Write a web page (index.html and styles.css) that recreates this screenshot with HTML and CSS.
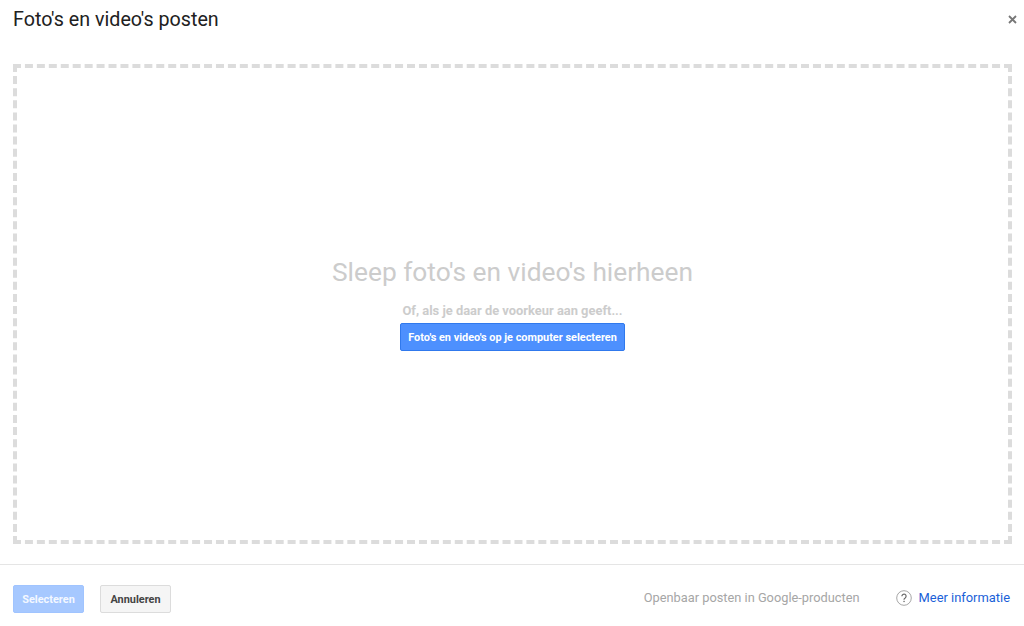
FILE: index.html
```html
<!DOCTYPE html>
<html lang="nl">
<head>
  <meta charset="UTF-8">
  <meta name="viewport" content="width=device-width, initial-scale=1.0">
  <title>Foto's en video's posten</title>
  <link rel="stylesheet" href="styles.css">
</head>
<body>
  <div class="dialog">
    <header class="title-bar">
      <h1>Foto's en video's posten</h1>
      <button class="close" type="button" aria-label="Sluiten">
        <svg width="9" height="9" viewBox="0 0 9 9"><path d="M1 1l7 7M8 1L1 8" stroke="#777" stroke-width="1.8" fill="none"/></svg>
      </button>
    </header>

    <main class="drop-zone">
      <div class="drop-title">Sleep foto's en video's hierheen</div>
      <div class="drop-hint">Of, als je daar de voorkeur aan geeft...</div>
      <button class="btn btn-blue" type="button">Foto's en video's op je computer selecteren</button>
    </main>

    <footer class="footer">
      <button class="btn btn-disabled" type="button">Selecteren</button>
      <button class="btn btn-grey" type="button">Annuleren</button>
      <span class="public-note">Openbaar posten in Google-producten</span>
      <svg class="help" width="16" height="16" viewBox="0 0 16 16">
        <circle cx="8" cy="8" r="7.3" stroke="#a6a6a6" stroke-width="1" fill="none"/>
        <path d="M5.9 6.2a2.1 2.1 0 1 1 3.3 1.7c-.8.5-1.2.9-1.2 1.8" stroke="#666" stroke-width="1.2" fill="none"/>
        <rect x="7.4" y="10.8" width="1.3" height="1.3" fill="#666"/>
      </svg>
      <a class="more-info" href="#">Meer informatie</a>
    </footer>
  </div>
</body>
</html>
```

FILE: styles.css
```css
html, body {
  margin: 0;
  padding: 0;
  height: 100%;
}

body {
  font-family: Roboto, Arial, sans-serif;
  background-color: #fff;
  overflow: hidden;
}

.dialog {
  display: flex;
  flex-direction: column;
  height: 626px;
}

.title-bar {
  display: flex;
  justify-content: space-between;
  align-items: center;
  height: 40px;
  padding: 0 7px 0 13px;
  flex-shrink: 0;
}

h1 {
  margin: -1px 0 0;
  font-size: 19.7px;
  font-weight: 400;
  color: #212121;
}

.close {
  display: flex;
  padding: 0;
  margin-top: -2px;
  border: none;
  background: none;
  cursor: pointer;
}

.drop-zone {
  display: flex;
  flex-direction: column;
  align-items: center;
  justify-content: center;
  height: 480px;
  margin: 24px 12px 0 13px;
  padding-bottom: 1px;
  border: 4px dashed #dcdcdc;
  box-sizing: border-box;
  flex-shrink: 0;
}

.drop-title {
  font-size: 26.3px;
  color: #ccc;
  line-height: 30px;
}

.drop-hint {
  margin-top: 16px;
  font-size: 12.9px;
  font-weight: 700;
  color: #ccc;
  line-height: 16px;
}

.btn {
  font-family: Roboto, Arial, sans-serif;
  font-size: 10.9px;
  font-weight: 700;
  border-radius: 2px;
  box-sizing: border-box;
  height: 28px;
  padding: 0;
  cursor: pointer;
}

.btn-blue {
  width: 225px;
  margin-top: 4px;
  padding-top: 1px;
  color: #fff;
  background-color: #4d90fe;
  border: 1px solid #3079ed;
}

.footer {
  display: flex;
  align-items: center;
  height: 62px;
  margin-top: 20px;
  padding: 4px 14px 0 13px;
  box-sizing: border-box;
  border-top: 1px solid #e5e5e5;
  flex-shrink: 0;
}

.btn-disabled {
  width: 71px;
  margin-top: 3px;
  color: #f4f8ff;
  background-color: #a6c8ff;
  border: 1px solid #a0c4ff;
}

.btn-grey {
  width: 71px;
  margin-top: 3px;
  margin-left: 16px;
  color: #444;
  background-color: #f5f5f5;
  border: 1px solid #dcdcdc;
}

.public-note {
  margin-left: auto;
  font-size: 12.8px;
  color: #a6a6a6;
}

.help {
  margin-left: 36px;
}

.more-info {
  margin-left: 7px;
  font-size: 12.9px;
  color: #1a5fd8;
  text-decoration: none;
}
```
